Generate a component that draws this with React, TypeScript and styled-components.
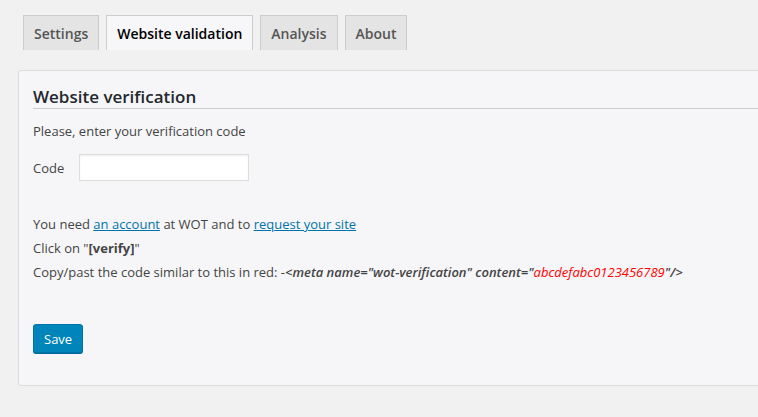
import styled, { createGlobalStyle } from 'styled-components';

const GlobalStyle = createGlobalStyle`
  html, body {
    margin: 0;
    padding: 0;
    background: #f1f1f1;
    font-family: 'Open Sans', 'Liberation Sans', sans-serif;
    color: #444;
    overflow: hidden;
  }
`;

const Page = styled.div`
  width: 758px;
  height: 417px;
  padding: 15px 0 0 18px;
  box-sizing: border-box;
`;

const TabBar = styled.div`
  display: flex;
  gap: 7px;
  padding-left: 5px;
  height: 35px;
`;

const Tab = styled.div<{ active?: boolean }>`
  box-sizing: border-box;
  height: 35px;
  padding: 6px 10px 0;
  font-size: 14px;
  line-height: 24px;
  font-weight: 600;
  border: 1px solid #ccc;
  border-bottom: none;
  background: ${(p) => (p.active ? '#f7f7f9' : '#e4e4e4')};
  color: ${(p) => (p.active ? '#000' : '#555')};
`;

const Panel = styled.div`
  margin-top: 20px;
  width: 760px;
  height: 316px;
  box-sizing: border-box;
  background: #f6f6f8;
  border: 1px solid #dcdcde;
  border-radius: 3px;
  padding: 15px 14px;
`;

const Heading = styled.h3`
  margin: 0;
  font-size: 17px;
  font-weight: 600;
  line-height: 22px;
  color: #23282d;
  border-bottom: 1px solid #ccc;
`;

const Text = styled.p<{ gap?: number }>`
  margin: ${(p) => p.gap ?? 0}px 0 0;
  font-size: 13px;
  line-height: 24px;
  color: #444;
`;

const Field = styled.div`
  display: flex;
  align-items: center;
  gap: 15px;
  margin-top: 11px;
  font-size: 13px;
`;

const Input = styled.input`
  width: 170px;
  height: 27px;
  box-sizing: border-box;
  border: 1px solid #ddd;
  background: #fff;
  box-shadow: inset 0 1px 2px rgba(0, 0, 0, 0.07);
`;

const Link = styled.a`
  color: #0073aa;
  text-decoration: underline;
`;

const Code = styled.span`
  font-style: italic;
  font-weight: 600;
`;

const Red = styled.span`
  color: #f00;
  font-style: italic;
  font-weight: 400;
`;

const SaveButton = styled.button`
  margin-top: 40px;
  height: 29px;
  padding: 0 10px;
  font-family: inherit;
  font-size: 13px;
  color: #fff;
  background: #0085ba;
  border: 1px solid #0073aa;
  border-radius: 3px;
  box-shadow: 0 1px 0 #006799;
`;

export default function App() {
  return (
    <>
      <GlobalStyle />
      <Page>
        <TabBar>
          <Tab>Settings</Tab>
          <Tab active>Website validation</Tab>
          <Tab>Analysis</Tab>
          <Tab>About</Tab>
        </TabBar>
        <Panel>
          <Heading>Website verification</Heading>
          <Text gap={10}>Please, enter your verification code</Text>
          <Field>
            <span>Code</span>
            <Input />
          </Field>
          <Text gap={31}>
            You need <Link>an account</Link> at WOT and to <Link>request your site</Link>
          </Text>
          <Text>
            Click on "<b>[verify]</b>"
          </Text>
          <Text>
            Copy/past the code similar to this in red: -
            <Code>
              &lt;meta name="wot-verification" content="<Red>abcdefabc0123456789</Red>"/&gt;
            </Code>
          </Text>
          <SaveButton>Save</SaveButton>
        </Panel>
      </Page>
    </>
  );
}
